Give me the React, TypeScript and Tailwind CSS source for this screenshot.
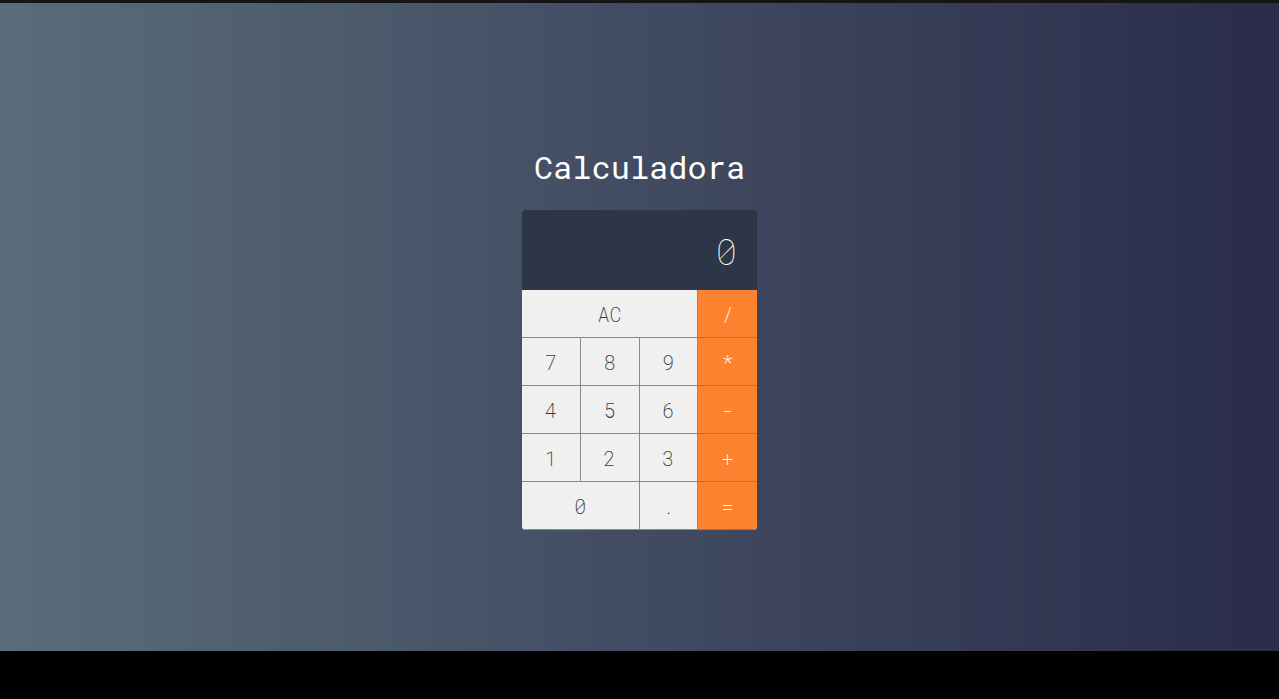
import React from 'react'

const mono = { fontFamily: '"Roboto Mono", "DejaVu Sans Mono", "Liberation Mono", monospace' }

const KEYS: { label: string; span?: 2 | 3; op?: boolean }[] = [
  { label: 'AC', span: 3 },
  { label: '/', op: true },
  { label: '7' }, { label: '8' }, { label: '9' }, { label: '*', op: true },
  { label: '4' }, { label: '5' }, { label: '6' }, { label: '-', op: true },
  { label: '1' }, { label: '2' }, { label: '3' }, { label: '+', op: true },
  { label: '0', span: 2 }, { label: '.' }, { label: '=', op: true },
]

export default function App() {
  return (
    <div className="w-[1279px] h-[699px] bg-black overflow-hidden">
      <div className="h-[3px] bg-[#151515]" />
      <div
        className="h-[648px] flex flex-col items-center bg-gradient-to-r from-[#5a6d7a] to-[#2a2c4a]"
        style={mono}
      >
        <h1 className="mt-[144px] text-[32px] leading-[40px] text-white font-normal">Calculadora</h1>
        <div className="mt-[23px] w-[235px] rounded-[4px] overflow-hidden">
          <div className="h-[80px] bg-[#2d3647] flex items-center justify-end pr-[20px] pt-[2px] text-white text-[36px] font-thin">
            0
          </div>
          <div className="grid grid-cols-4 bg-[#f0f0f0]">
            {KEYS.map((k, i) => (
              <div
                key={i}
                className={
                  'h-[48px] flex items-center justify-center text-[20px] font-extralight border-r border-b border-[#8a8a8a] ' +
                  (k.span === 3 ? 'col-span-3 ' : k.span === 2 ? 'col-span-2 ' : '') +
                  (k.op ? 'bg-[#fd8230] text-white border-r-0 border-[#c86a2a] ' : 'text-[#3a3a3a]')
                }
              >
                {k.label}
              </div>
            ))}
          </div>
        </div>
      </div>
    </div>
  )
}
